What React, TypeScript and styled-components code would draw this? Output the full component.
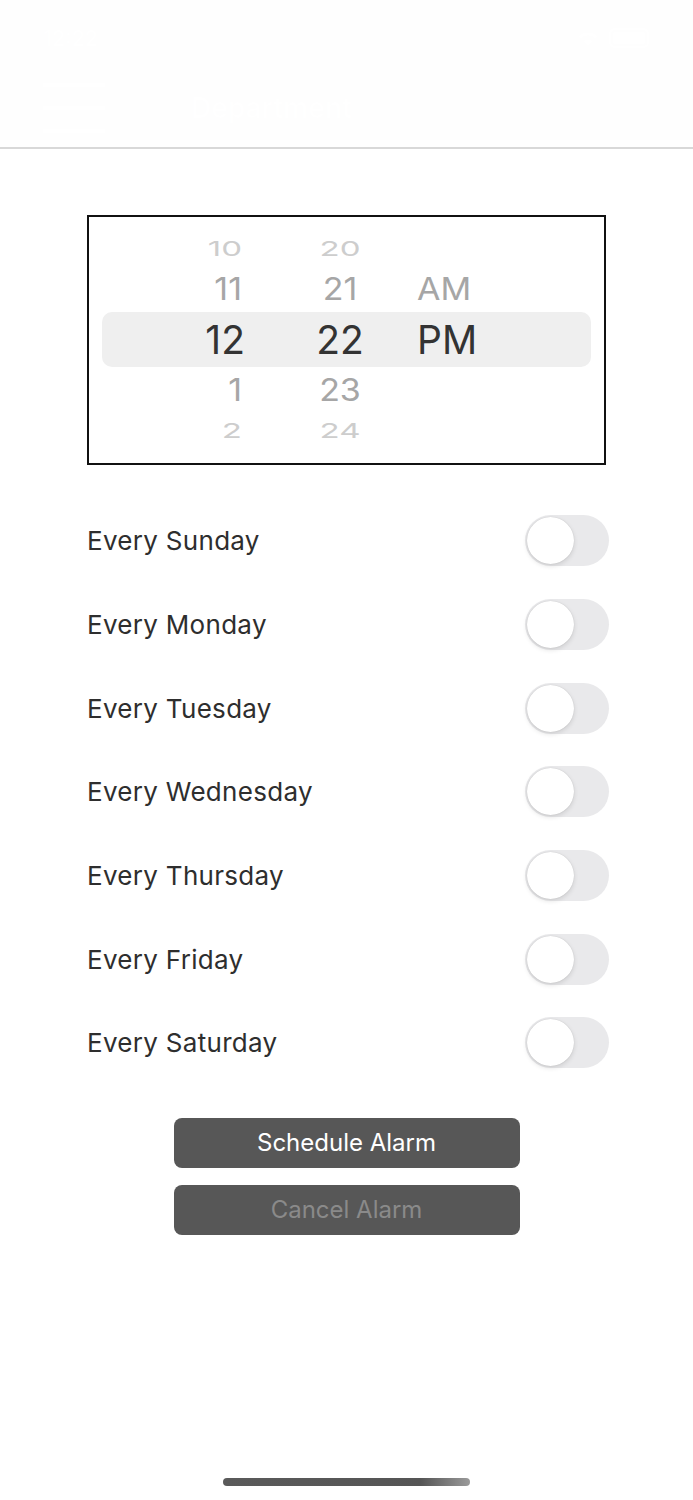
import React from "react";
import styled, { createGlobalStyle } from "styled-components";

const Global = createGlobalStyle`
  html, body { margin: 0; padding: 0; background: #ffffff; }
  body { font-family: Inter, "Noto Sans", "Liberation Sans", sans-serif; -webkit-font-smoothing: antialiased; }
  * { box-sizing: border-box; }
`;

const Screen = styled.div`
  width: 693px;
  min-height: 1500px;
  display: flex;
  flex-direction: column;
  background: #ffffff;
`;

const Header = styled.header`
  height: 149px;
  background: #fefefe;
  border-bottom: 2px solid #d8d8d8;
  display: flex;
  flex-direction: column;
  padding: 26px 40px 0 43px;
  color: #ffffff;
`;

const StatusBar = styled.div`
  display: flex;
  justify-content: space-between;
  align-items: center;
  height: 24px;
  font-size: 21px;
  font-weight: 600;
`;

const StatusIcons = styled.div`
  display: flex;
  align-items: center;
  gap: 8px;
`;

const NavBar = styled.div`
  display: flex;
  align-items: center;
  gap: 86px;
  margin-top: 33px;
`;

const Burger = styled.div`
  display: flex;
  flex-direction: column;
  gap: 19px;
  width: 62px;
  span {
    display: block;
    height: 4px;
    background: #ffffff;
  }
`;

const Title = styled.div`
  font-size: 28px;
  font-weight: 600;
`;

const Content = styled.main`
  display: flex;
  flex-direction: column;
  padding: 66px 84px 0 87px;
`;

const PickerBox = styled.div`
  width: 519px;
  height: 250px;
  border: 2px solid #111111;
  padding: 15px 13px 16px 13px;
  display: flex;
  flex-direction: column;
`;

const PickerRow = styled.div<{ $depth: number }>`
  display: grid;
  grid-template-columns: 188px 127px 1fr;
  align-items: center;
  height: ${(p) => (p.$depth === 0 ? 56 : p.$depth === 1 ? 46 : 34)}px;
  border-radius: 10px;
  background: ${(p) => (p.$depth === 0 ? "#efefef" : "transparent")};
  color: ${(p) => (p.$depth === 0 ? "#333333" : p.$depth === 1 ? "#a6a6a6" : "#cdcdcd")};
  font-size: ${(p) => (p.$depth === 0 ? 39 : p.$depth === 1 ? 34 : 33)}px;
  font-weight: 400;
  line-height: 1;
`;

const Cell = styled.div<{ $align: "right" | "center" | "left"; $depth: number }>`
  text-align: ${(p) => p.$align};
  padding-right: ${(p) => (p.$align === "right" ? (p.$depth === 0 ? 45 : 48) : p.$align === "center" ? 27 : 0)}px;
  transform: scaleY(${(p) => (p.$depth === 0 ? 1 : p.$depth === 1 ? 0.9 : 0.62)});
`;

const DayList = styled.div`
  display: flex;
  flex-direction: column;
  margin-top: 34px;
  width: 522px;
`;

const DayRow = styled.div`
  height: 83.67px;
  display: flex;
  align-items: center;
  justify-content: space-between;
`;

const DayLabel = styled.span`
  font-size: 26px;
  color: #2e2e2e;
  letter-spacing: 0.3px;
`;

const Switch = styled.div`
  width: 84px;
  height: 51px;
  border-radius: 26px;
  background: #e9e9eb;
  padding: 2px;
  display: flex;
  align-items: center;
`;

const Knob = styled.div`
  width: 47px;
  height: 47px;
  border-radius: 50%;
  background: #ffffff;
  box-shadow: 0 2px 5px rgba(0, 0, 0, 0.12), 0 0 1px rgba(0, 0, 0, 0.18);
`;

const Buttons = styled.div`
  display: flex;
  flex-direction: column;
  align-items: center;
  gap: 17px;
  margin-top: 33px;
  margin-left: -87px;
  margin-right: -84px;
`;

const ActionButton = styled.button<{ $disabled?: boolean }>`
  width: 346px;
  height: 50px;
  border: none;
  border-radius: 8px;
  background: #575757;
  color: ${(p) => (p.$disabled ? "#8a8a8a" : "#ffffff")};
  font-family: inherit;
  font-size: 24px;
  font-weight: 400;
  padding: 0;
`;

const Spacer = styled.div`
  flex: 1;
`;

const HomeIndicator = styled.div`
  align-self: center;
  width: 247px;
  height: 8px;
  border-radius: 4px;
  margin: 0 0 14px 0;
  background: linear-gradient(90deg, #5a5a5a 0%, #555555 80%, #9a9a9a 100%);
`;

const rows = [
  { h: "10", m: "20", p: "", d: 2 },
  { h: "11", m: "21", p: "AM", d: 1 },
  { h: "12", m: "22", p: "PM", d: 0 },
  { h: "1", m: "23", p: "", d: 1 },
  { h: "2", m: "24", p: "", d: 2 },
];

const days = ["Sunday", "Monday", "Tuesday", "Wednesday", "Thursday", "Friday", "Saturday"];

export default function App() {
  return (
    <>
      <Global />
      <Screen>
        <Header>
          <StatusBar>
            <span>12:22</span>
            <StatusIcons>
              <svg width="26" height="18" viewBox="0 0 26 18">
                <path d="M13 16 L9 12 A6 6 0 0 1 17 12 Z M4 7 A13 13 0 0 1 22 7 L20 9 A10 10 0 0 0 6 9 Z" fill="#ffffff" />
              </svg>
              <svg width="44" height="20" viewBox="0 0 44 20">
                <rect x="1" y="1" width="38" height="18" rx="5" fill="none" stroke="#ffffff" strokeWidth="2" />
                <rect x="4" y="4" width="32" height="12" rx="3" fill="#ffffff" />
              </svg>
            </StatusIcons>
          </StatusBar>
          <NavBar>
            <Burger>
              <span />
              <span />
              <span />
            </Burger>
            <Title>Department</Title>
          </NavBar>
        </Header>
        <Content>
          <PickerBox>
            {rows.map((r, i) => (
              <PickerRow key={i} $depth={r.d}>
                <Cell $align="right" $depth={r.d}>{r.h}</Cell>
                <Cell $align="center" $depth={r.d}>{r.m}</Cell>
                <Cell $align="left" $depth={r.d}>{r.p}</Cell>
              </PickerRow>
            ))}
          </PickerBox>
          <DayList>
            {days.map((d) => (
              <DayRow key={d}>
                <DayLabel>Every {d}</DayLabel>
                <Switch>
                  <Knob />
                </Switch>
              </DayRow>
            ))}
          </DayList>
          <Buttons>
            <ActionButton>Schedule Alarm</ActionButton>
            <ActionButton $disabled>Cancel Alarm</ActionButton>
          </Buttons>
        </Content>
        <Spacer />
        <HomeIndicator />
      </Screen>
    </>
  );
}
